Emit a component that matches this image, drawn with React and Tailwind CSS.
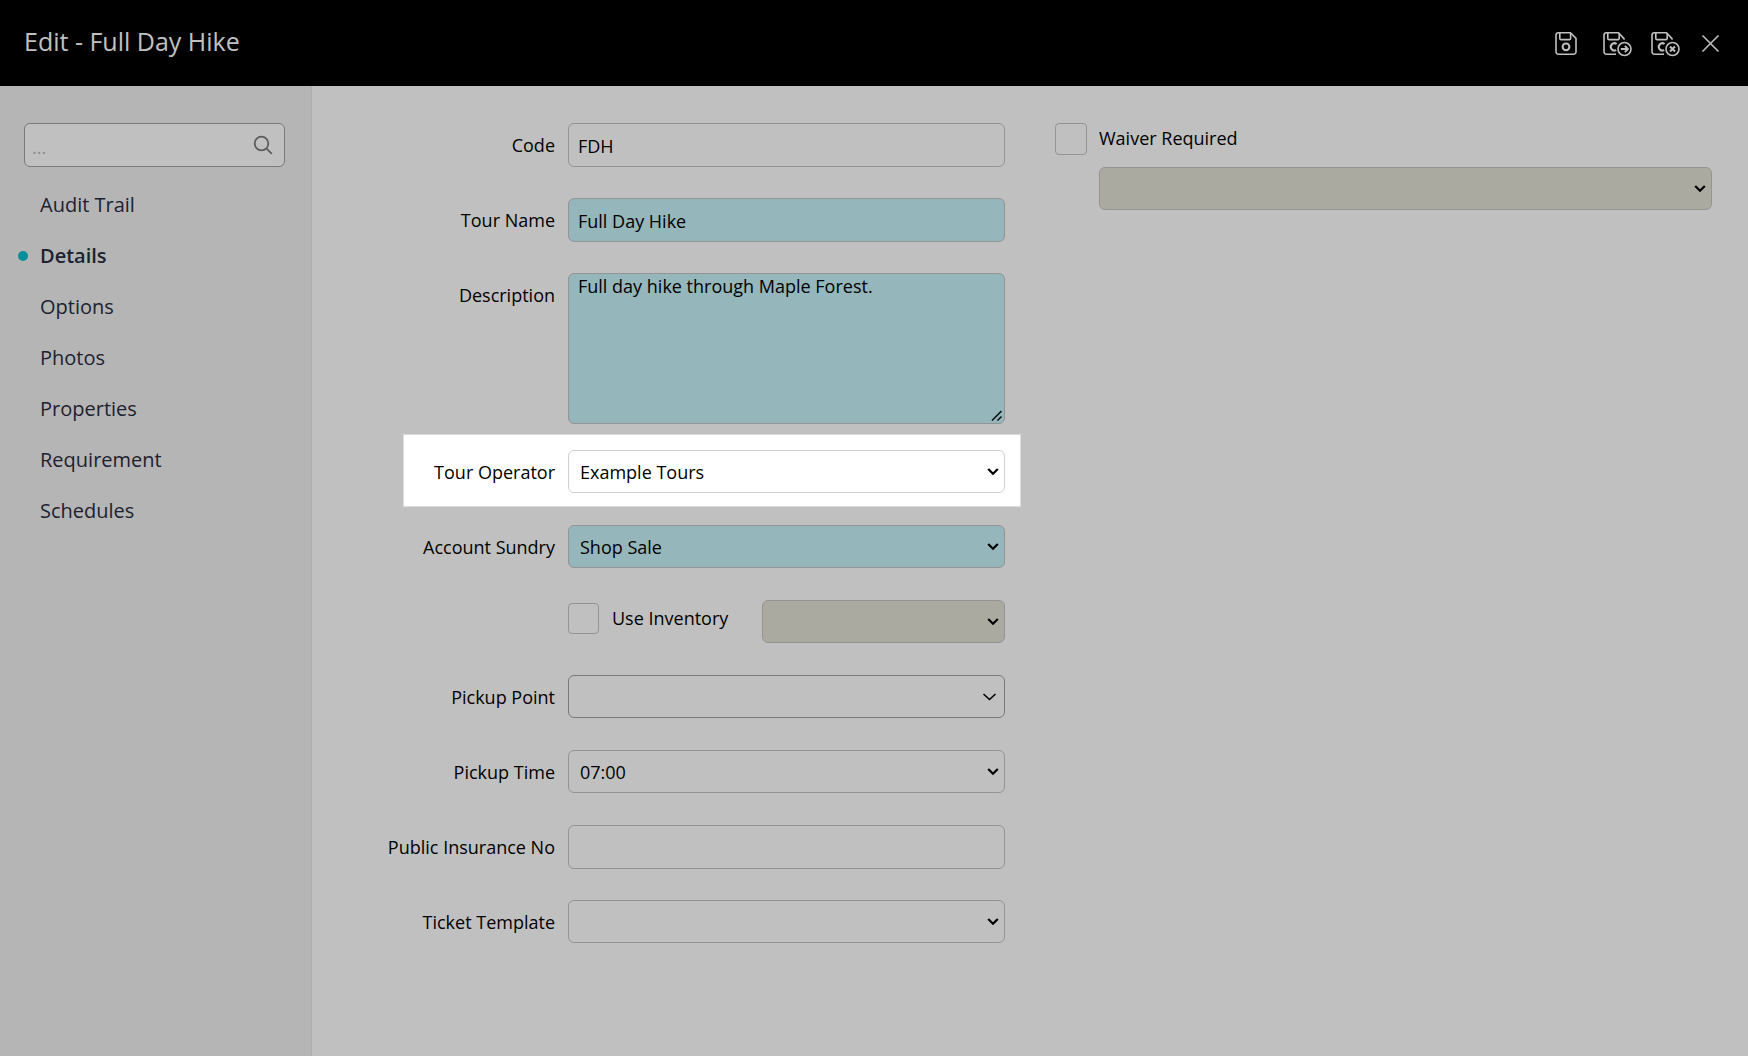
import React, { useState } from "react";
import clsx from "clsx";

const sections = [
  "Audit Trail",
  "Details",
  "Options",
  "Photos",
  "Properties",
  "Requirement",
  "Schedules",
];

const fieldBase = "w-full rounded-md border text-lg text-black outline-none";
const inputClass = "h-11 px-[9px] pt-0.5";
const plain = "border-[#949494] bg-[#c0c0c0]";
const required = "border-[#949494] bg-[#95b6ba]";
const locked = "border-[#949494] bg-[#abaaa1] opacity-100";

// Floppy outline shared by the three save actions
function SaveIcon({ badge }) {
  return (
    <svg
      className="h-8 w-8"
      viewBox="0 -2 32 32"
      fill="none"
      stroke="currentColor"
      strokeWidth="1.6"
      strokeLinejoin="round"
    >
      {badge ? (
        <>
          <path d="M14 25.2H4.5a2.5 2.5 0 0 1-2.5-2.5V6.3a2.5 2.5 0 0 1 2.5-2.5h12l5.5 5.8v1.2" />
          <path d="M5.8 4v5.6a1 1 0 0 0 1 1h9.4a1 1 0 0 0 1-1V4" />
          <path
            d="M14.6 15a3.6 3.6 0 1 0-.4 6"
            strokeWidth="2"
          />
          <circle cx="22.5" cy="20" r="6.5" />
          {badge === "next" ? (
            <path
              d="M18.8 20h7M22.8 16.8l3.2 3.2-3.2 3.2"
              strokeWidth="1.8"
            />
          ) : (
            <path d="M20 17.5l5 5M25 17.5l-5 5" strokeWidth="2" />
          )}
        </>
      ) : (
        <>
          <path d="M4.5 3.8h12l5.5 5.6v13.3a2.5 2.5 0 0 1-2.5 2.5h-15A2.5 2.5 0 0 1 2 22.7V6.3a2.5 2.5 0 0 1 2.5-2.5z" />
          <path d="M5.8 4v5.6a1 1 0 0 0 1 1h8.8a1 1 0 0 0 1-1V4" />
          <circle cx="12" cy="17.8" r="3.4" strokeWidth="2" />
        </>
      )}
    </svg>
  );
}

function Header() {
  return (
    <header className="flex h-[86px] items-center justify-between bg-black pr-[26px] pl-6 text-[#c0c0c0]">
      <h1 className="pb-0.5 text-[25px]">Edit - Full Day Hike</h1>
      <div className="flex items-center gap-4">
        <button type="button" aria-label="Save">
          <SaveIcon />
        </button>
        <button type="button" aria-label="Save and continue">
          <SaveIcon badge="next" />
        </button>
        <button type="button" aria-label="Save and close">
          <SaveIcon badge="close" />
        </button>
        <button type="button" aria-label="Close">
          <svg
            className="h-6 w-6"
            viewBox="0 0 24 24"
            fill="none"
            stroke="currentColor"
            strokeWidth="1.6"
          >
            <path d="M4.5 4.5l16 16M20.5 4.5l-16 16" />
          </svg>
        </button>
      </div>
    </header>
  );
}

function Sidebar({ active, setActive }) {
  return (
    <aside className="w-[312px] shrink-0 border-r border-[#adadad] bg-[#b5b5b5] pt-[37px]">
      <div className="relative mr-[26px] ml-6">
        <input
          type="text"
          aria-label="Search"
          placeholder="..."
          className="h-11 w-full rounded-md border border-[#7a7a7a] bg-[#c0c0c0] pt-1 pr-12 pl-[7px] text-lg placeholder:text-[#8c8c8c]"
        />
        <svg
          className="absolute top-3 right-3 h-5 w-5 text-[#5c5c5c]"
          viewBox="0 0 20 20"
          fill="none"
          stroke="currentColor"
          strokeWidth="1.8"
        >
          <circle cx="8.5" cy="8.5" r="6.8" />
          <path d="M13.3 13.3l5.5 5.5" />
        </svg>
      </div>
      <nav className="mt-3">
        {sections.map((name) => (
          <a
            key={name}
            href="#"
            onClick={() => setActive(name)}
            className={clsx(
              "flex h-[51px] items-center text-xl text-[#1c2230]",
              active === name && "font-semibold"
            )}
          >
            <span
              className={clsx(
                "mr-3 ml-[18px] h-2.5 w-2.5 rounded-full",
                active === name && "bg-[#078f99]"
              )}
            />
            {name}
          </a>
        ))}
      </nav>
    </aside>
  );
}

function Select({ className, thin, children, ...props }) {
  return (
    <div className="relative">
      <select
        className={clsx(
          fieldBase,
          "h-[43px] appearance-none pr-8 pl-[11px]",
          className
        )}
        {...props}
      >
        {children}
      </select>
      {thin ? (
        <svg
          className="pointer-events-none absolute top-[14px] right-2 h-4 w-4"
          viewBox="0 0 16 16"
          fill="none"
          stroke="black"
          strokeWidth="1.6"
        >
          <path d="M2.5 5L8.5 10.5 14.5 5" />
        </svg>
      ) : (
        <svg
          className="pointer-events-none absolute top-[14px] right-1 h-4 w-4"
          viewBox="0 0 16 16"
          fill="none"
          stroke="black"
          strokeWidth="2.2"
        >
          <path d="M3.2 5L8 9.8 12.8 5" />
        </svg>
      )}
    </div>
  );
}

function Field({ id, label, children }) {
  return (
    <div className="mb-[31px] grid h-11 grid-cols-[243px_1fr] gap-x-[13px]">
      <label htmlFor={id} className="pt-2 text-right text-lg">
        {label}
      </label>
      <div>{children}</div>
    </div>
  );
}

function DetailsForm() {
  const [code, setCode] = useState("FDH");
  const [tourName, setTourName] = useState("Full Day Hike");
  const [description, setDescription] = useState(
    "Full day hike through Maple Forest."
  );
  const [insuranceNo, setInsuranceNo] = useState("");

  return (
    <form className="grid flex-1 grid-cols-[693fr_657fr] gap-x-[50px] bg-[#c0c0c0] pt-[37px] pr-9">
      <div>
        <Field id="code" label="Code">
          <input
            id="code"
            value={code}
            onChange={(e) => setCode(e.target.value)}
            className={clsx(fieldBase, inputClass, plain)}
          />
        </Field>
        <Field id="tourName" label="Tour Name">
          <input
            id="tourName"
            value={tourName}
            onChange={(e) => setTourName(e.target.value)}
            className={clsx(fieldBase, inputClass, required)}
          />
        </Field>
        <div className="mb-2.5 grid grid-cols-[243px_1fr] gap-x-[13px]">
          <label htmlFor="description" className="pt-2 text-right text-lg">
            Description
          </label>
          <div className="relative">
            <textarea
              id="description"
              value={description}
              onChange={(e) => setDescription(e.target.value)}
              className={clsx(
                fieldBase,
                required,
                "block h-[151px] resize-y px-[9px] leading-6 [&::-webkit-resizer]:bg-transparent"
              )}
            />
            <svg
              className="pointer-events-none absolute right-0.5 bottom-0.5 h-3 w-3"
              viewBox="0 0 12 12"
              fill="none"
              stroke="#0b1416"
              strokeWidth="1.6"
            >
              <path d="M1 10.5L10.5 1M6.5 10.5l4-4" />
            </svg>
          </div>
        </div>

        {/* Tour operator row, lifted out of the dimmed form */}
        <div className="-mr-4 mb-[18px] ml-[91px] grid h-[73px] grid-cols-[152px_1fr] gap-x-[13px] bg-white pt-4 pr-4 ring-1 ring-[#dcdcdc] ring-inset">
          <label htmlFor="operator" className="pt-2 text-right text-lg">
            Tour Operator
          </label>
          <Select id="operator" className="border-[#d0d0d0] bg-white">
            <option>Example Tours</option>
          </Select>
        </div>

        <Field id="sundry" label="Account Sundry">
          <Select id="sundry" className={required}>
            <option>Shop Sale</option>
          </Select>
        </Field>
        <div className="mb-[31px] ml-64 flex h-11 items-start">
          <input
            id="inventory"
            type="checkbox"
            className="mt-[3px] h-[31px] w-[31px] appearance-none rounded-sm border border-[#949494]"
          />
          <label htmlFor="inventory" className="ml-[13px] pt-1 text-lg">
            Use Inventory
          </label>
          <div className="ml-auto w-[243px]">
            <Select disabled aria-label="Inventory item" className={locked} />
          </div>
        </div>
        <Field id="pickupPoint" label="Pickup Point">
          <Select
            id="pickupPoint"
            thin
            className="border-[#7a7a7a] bg-[#c0c0c0]"
          />
        </Field>
        <Field id="pickupTime" label="Pickup Time">
          <Select id="pickupTime" className={plain}>
            <option>07:00</option>
          </Select>
        </Field>
        <Field id="insuranceNo" label="Public Insurance No">
          <input
            id="insuranceNo"
            value={insuranceNo}
            onChange={(e) => setInsuranceNo(e.target.value)}
            className={clsx(fieldBase, inputClass, plain)}
          />
        </Field>
        <Field id="ticketTemplate" label="Ticket Template">
          <Select id="ticketTemplate" className={plain} />
        </Field>
      </div>

      <div>
        <div className="mb-3 flex h-8 items-center gap-3">
          <input
            id="waiver"
            type="checkbox"
            className="h-8 w-8 appearance-none rounded-sm border border-[#949494]"
          />
          <label htmlFor="waiver" className="pb-0.5 text-lg">
            Waiver Required
          </label>
        </div>
        <div className="pl-11">
          <Select disabled aria-label="Waiver template" className={locked} />
        </div>
      </div>
    </form>
  );
}

function App() {
  const [active, setActive] = useState("Details");

  return (
    <div className="flex min-h-screen flex-col font-['Open_Sans',sans-serif] text-black">
      <Header />
      <main className="flex flex-1">
        <Sidebar active={active} setActive={setActive} />
        <DetailsForm />
      </main>
    </div>
  );
}

export default App;
